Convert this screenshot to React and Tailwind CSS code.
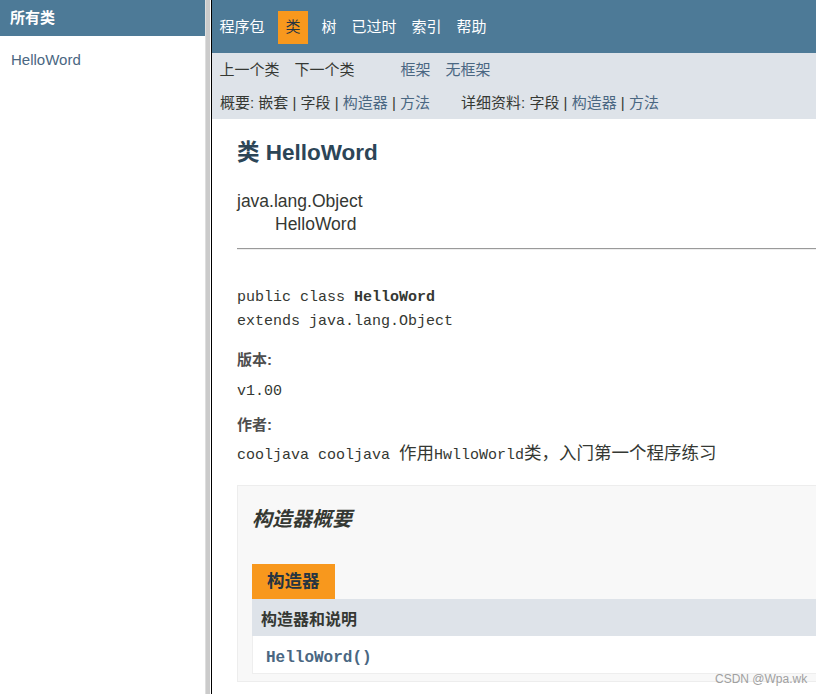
import React from 'react';

const sans = { fontFamily: '"Liberation Sans", Arial, "Noto Sans CJK SC", sans-serif' };

export default function App() {
  return (
    <div className="relative flex w-[816px] h-[694px] overflow-hidden bg-white text-[#353833] font-['Liberation_Sans','Noto_Sans_CJK_SC',sans-serif]">
      {/* Left frame: all classes */}
      <div className="w-[205px] shrink-0">
        <div className="h-[36px] bg-[#4d7a97] pl-[10px] flex items-center text-[15px] font-bold text-white">所有类</div>
        <div className="pl-[11px] pt-[13px] text-[15px] leading-[22px] text-[#4a6782]">HelloWord</div>
      </div>

      {/* Frame splitter */}
      <div className="w-[5px] shrink-0 bg-[#cbcbcb] border-l border-[#dedede]"></div>
      <div className="w-px shrink-0 bg-white"></div>

      {/* Right frame */}
      <div className="flex-1 min-w-0 border-l border-black overflow-hidden">
        {/* Top nav */}
        <div className="h-[53px] bg-[#4d7a97] pt-[11px]">
          <ul className="flex text-[15px] text-white">
            <li className="h-[33px] px-[7.5px] flex items-center">程序包</li>
            <li className="h-[33px] px-[7.5px] mx-[6px] flex items-center bg-[#f8981d] text-[#253441]">类</li>
            <li className="h-[33px] px-[7.5px] flex items-center">树</li>
            <li className="h-[33px] px-[7.5px] flex items-center">已过时</li>
            <li className="h-[33px] px-[7.5px] flex items-center">索引</li>
            <li className="h-[33px] px-[7.5px] flex items-center">帮助</li>
          </ul>
        </div>

        {/* Sub nav */}
        <div className="h-[66px] bg-[#dee3e9] text-[15px]">
          <div className="h-[34px] pt-px flex items-center">
            <span className="px-[7.5px]">上一个类</span>
            <span className="px-[7.5px]">下一个类</span>
            <span className="ml-[31px] px-[7.5px] text-[#4a6782]">框架</span>
            <span className="px-[7.5px] text-[#4a6782]">无框架</span>
          </div>
          <div className="h-[32px] flex items-center pl-[8px] whitespace-pre">
            <span>
              概要: 嵌套 | 字段 | <span className="text-[#4a6782]">构造器</span> | <span className="text-[#4a6782]">方法</span>
            </span>
            <span className="ml-[31px]">
              详细资料: 字段 | <span className="text-[#4a6782]">构造器</span> | <span className="text-[#4a6782]">方法</span>
            </span>
          </div>
        </div>

        {/* Content */}
        <div className="pl-[25px]">
          <h2 className="mt-[20px] text-[22.5px] leading-[28px] font-bold text-[#2c4557]">类 HelloWord</h2>

          <div className="mt-[23px] text-[17.5px] leading-[23px]">
            <div>java.lang.Object</div>
            <div className="pl-[38px]">HelloWord</div>
          </div>

          <div className="mt-[12px] h-[2px] border-t border-[#9a9a9a] border-b border-b-[#eeeeee]"></div>

          <pre className="mt-[36px] text-[15px] leading-[24px] font-['Liberation_Mono','Noto_Sans_CJK_SC',monospace]">
            public class <span className="font-bold">HelloWord</span>
            {'\n'}extends java.lang.Object
          </pre>

          <div className="mt-[16px] text-[15px] leading-[20px] font-bold text-[#4e4e4e]">版本:</div>
          <div className="mt-[12px] text-[15px] leading-[20px] font-['Liberation_Mono',monospace]">v1.00</div>
          <div className="mt-[13px] text-[15px] leading-[20px] font-bold text-[#4e4e4e]">作者:</div>
          <div className="mt-[8px] text-[15px] leading-[20px] whitespace-pre font-['Liberation_Mono','Noto_Sans_CJK_SC',monospace]">
            cooljava cooljava <span className="text-[17.5px]" style={sans}>作用</span>HwlloWorld<span className="text-[17.5px]" style={sans}>类，入门第一个程序练习</span>
          </div>

          {/* Constructor summary */}
          <div className="mt-[19px] w-[700px] border border-[#ededed] bg-[#f8f8f8] pl-[14px] pt-[20px] pb-[7px]">
            <h3 className="text-[20px] leading-[26px] font-bold italic">构造器概要</h3>
            <div className="mt-[32px]">
              <div className="inline-flex h-[35px] items-center px-[15px] bg-[#f8981d] text-[17.5px] font-bold text-[#253441]">构造器</div>
              <div className="h-[37px] flex items-center pl-[9px] pt-[5px] bg-[#dee3e9] text-[16px] font-bold">构造器和说明</div>
              <div className="h-[38px] flex items-center pl-[13px] pt-[7px] bg-white border-l border-b border-[#eeeeee] text-[16px] font-bold text-[#4a6782] font-['Liberation_Mono',monospace]">
                HelloWord()
              </div>
            </div>
          </div>
        </div>
      </div>

      {/* Watermark */}
      <div className="absolute left-[715px] top-[671px] text-[12px] leading-[16px] text-[#a0a0a0]">CSDN @Wpa.wk</div>
    </div>
  );
}
